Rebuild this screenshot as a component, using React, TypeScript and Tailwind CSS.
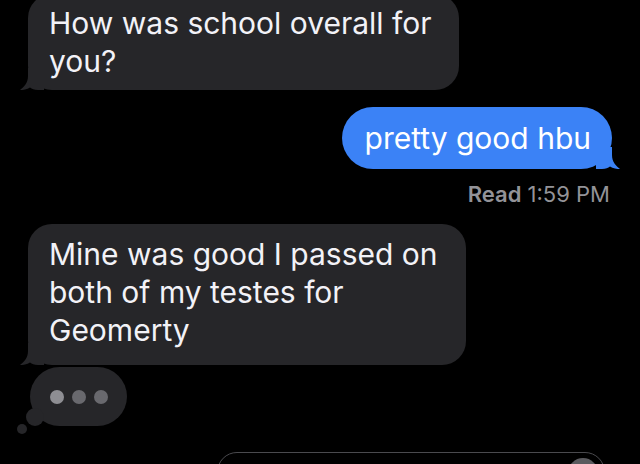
const BUBBLE_FONT = { fontFamily: "Inter, 'Liberation Sans', sans-serif" };

const Tail = ({ color, flip }: { color: string; flip?: boolean }) => (
	<svg
		width="24"
		height="22"
		viewBox="0 0 24 22"
		className={flip ? "absolute -right-[8px] bottom-0 -scale-x-100" : "absolute -left-[8px] bottom-0"}
	>
		<path d="M8 0 L24 0 L24 22 L18 22 C14 22 12 21 10 19.5 C7 21.5 3 22 0 22 C4 19 8 15 8 8 Z" fill={color} />
	</svg>
);

const Received = ({ lines, className }: { lines: string[]; className: string }) => (
	<div className={`relative shrink-0 bg-[#262629] rounded-[24px] px-[21px] text-[30px] leading-[38px] text-[#f2f2f7] ${className}`}>
		{lines.map((l) => (
			<div key={l} className="whitespace-nowrap">{l}</div>
		))}
		<Tail color="#262629" />
	</div>
);

const TypingIndicator = () => (
	<div className="relative shrink-0 ml-[30px] mt-[2px] w-[97px] h-[59px]">
		<div className="absolute left-0 top-0 w-[97px] h-[59px] rounded-full bg-[#262629] flex items-center justify-center gap-[8px]">
			<span className="w-[14px] h-[14px] rounded-full bg-[#8e8e93]" />
			<span className="w-[14px] h-[14px] rounded-full bg-[#69696e]" />
			<span className="w-[14px] h-[14px] rounded-full bg-[#69696e]" />
		</div>
		<span className="absolute left-[-4px] top-[41px] w-[18px] h-[18px] rounded-full bg-[#262629]" />
		<span className="absolute left-[-13px] top-[57px] w-[10px] h-[10px] rounded-full bg-[#262629]" />
	</div>
);

export default function App() {
	return (
		<div className="w-[640px] h-[464px] bg-black overflow-hidden flex flex-col" style={BUBBLE_FONT}>
			<Received
				lines={["How was school overall for", "you?"]}
				className="ml-[28px] w-[431px] -mt-[6px] pt-[10px] pb-[10px]"
			/>

			<div className="relative shrink-0 self-end mr-[28px] mt-[17px] bg-[#3b82f6] rounded-[31px] pl-[23px] pr-[21px] py-[12px] text-[30px] leading-[38px] text-white whitespace-nowrap">
				pretty good hbu
				<Tail color="#3b82f6" flip />
			</div>

			<div className="shrink-0 self-end mr-[30px] mt-[13px] text-[22px] leading-[25px] text-[#939398]">
				<span className="font-semibold">Read</span> 1:59 PM
			</div>

			<Received
				lines={["Mine was good I passed on", "both of my testes for", "Geomerty"]}
				className="ml-[28px] w-[438px] mt-[17px] pt-[11px] pb-[16px]"
			/>

			<TypingIndicator />

			<div className="shrink-0 ml-[217px] mt-[26px] w-[388px] h-[40px] rounded-[20px] border-[1.5px] border-[#4a4a4e] relative">
				<span className="absolute right-[6px] top-[5px] w-[30px] h-[30px] rounded-full bg-[#5a5a5e]" />
			</div>
		</div>
	);
}
